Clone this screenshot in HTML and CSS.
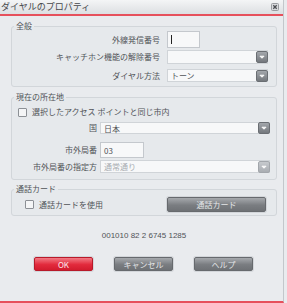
FILE: index.html
```html
<!DOCTYPE html>
<html lang="ja">
<head>
<meta charset="utf-8">
<link rel="stylesheet" href="styles.css">
</head>
<body>
<div class="window">
  <div class="titlebar">
    <span class="title">ダイヤルのプロパティ</span>
    <span class="close"><svg width="8" height="8" viewBox="0 0 8 8"><rect x="0.5" y="0.5" width="7" height="7" rx="1" fill="#d9dbde" stroke="#9a9da1"/><path d="M2.3 2.3 L5.7 5.7 M5.7 2.3 L2.3 5.7" stroke="#4a4d51" stroke-width="1.3"/></svg></span>
  </div>
  <div class="content">
    <fieldset class="group g1">
      <legend>全般</legend>
      <div class="frow f1"><span class="lbl">外線発信番号</span><span class="input code-in"><span class="caret"></span></span></div>
      <div class="frow f2"><span class="lbl">キャッチホン機能の解除番号</span><span class="select wide"><span class="val"></span><span class="drop"><svg width="12" height="12" viewBox="0 0 12 12"><path d="M3.5 5 L6 7.5 L8.5 5 Z" fill="#fff" stroke="#fff" stroke-width="1" stroke-linejoin="round"/></svg></span></span></div>
      <div class="frow f3"><span class="lbl">ダイヤル方法</span><span class="select wide"><span class="val">トーン</span><span class="drop"><svg width="12" height="12" viewBox="0 0 12 12"><path d="M3.5 5 L6 7.5 L8.5 5 Z" fill="#fff" stroke="#fff" stroke-width="1" stroke-linejoin="round"/></svg></span></span></div>
    </fieldset>

    <fieldset class="group g2">
      <legend>現在の所在地</legend>
      <div class="check c1"><span class="box"></span><span>選択したアクセス ポイントと同じ市内</span></div>
      <div class="frow2 r-country"><span class="lbl">国</span><span class="select full"><span class="val">日本</span><span class="drop"><svg width="12" height="12" viewBox="0 0 12 12"><path d="M3.5 5 L6 7.5 L8.5 5 Z" fill="#fff" stroke="#fff" stroke-width="1" stroke-linejoin="round"/></svg></span></span></div>
      <div class="frow2 r-area"><span class="lbl">市外局番</span><span class="input area-in">03</span></div>
      <div class="frow2 r-rule"><span class="lbl">市外局番の指定方</span><span class="select full disabled"><span class="val">通常通り</span><span class="drop"><svg width="12" height="12" viewBox="0 0 12 12"><path d="M3.5 5 L6 7.5 L8.5 5 Z" fill="#fff" stroke="#fff" stroke-width="1" stroke-linejoin="round"/></svg></span></span></div>
    </fieldset>

    <fieldset class="group g3">
      <legend>通話カード</legend>
      <div class="cardrow">
        <div class="check c2"><span class="box"></span><span>通話カードを使用</span></div>
        <span class="btn gray card-btn">通話カード</span>
      </div>
    </fieldset>

    <div class="number">001010 82 2 6745 1285</div>

    <div class="buttons">
      <span class="btn red">OK</span>
      <span class="btn gray">キャンセル</span>
      <span class="btn gray">ヘルプ</span>
    </div>
  </div>
</div>
</body>
</html>
```

FILE: styles.css
```css
html, body {
  margin: 0;
  padding: 0;
  background: #e9ebee;
}
body {
  font-family: "Noto Sans CJK JP", "Liberation Sans", sans-serif;
  font-size: 8px;
  color: #505357;
}
.window {
  width: 284px;
  height: 303px;
  box-sizing: border-box;
  border-right: 1px solid #c3c7cb;
  border-bottom: 2px solid #e6505c;
  background: #e9ebee;
  display: flex;
  flex-direction: column;
}
.titlebar {
  height: 14px;
  border-bottom: 2px solid #e6505c;
  background: linear-gradient(#f4f5f6, #dcdfe2);
  display: flex;
  align-items: center;
  justify-content: space-between;
  padding: 0 4px 0 1px;
}
.title {
  font-size: 9px;
  color: #45474b;
  line-height: 14px;
}
.close {
  display: flex;
  width: 8px;
  height: 8px;
}
.content {
  padding: 5px 0 0 11px;
  display: flex;
  flex-direction: column;
}
.group {
  margin: 0;
  width: 266px;
  box-sizing: border-box;
  border: 1px solid #d2d6da;
  border-radius: 3px;
  background: #e6e9ec;
  padding: 0;
}
.group legend {
  font-size: 8px;
  line-height: 10px;
  padding: 0 2px;
  margin-left: 2px;
  color: #505357;
}
.lbl {
  text-align: right;
  white-space: nowrap;
  line-height: 12px;
}
.frow {
  display: grid;
  grid-template-columns: 148px auto;
  column-gap: 7px;
  align-items: center;
}
.f1 { margin-top: 0; height: 17px; }
.f2 { margin-top: 2px; height: 14px; }
.f3 { margin-top: 5px; height: 13px; }
.g1 { padding-bottom: 4px; }

.input {
  box-sizing: border-box;
  background: #f7f8f9;
  border: 1px solid #c4c8cd;
  display: flex;
  align-items: center;
  padding-left: 3px;
  color: #505357;
}
.code-in {
  width: 33px;
  height: 17px;
}
.caret {
  width: 1px;
  height: 9px;
  background: #222;
}
.select {
  box-sizing: border-box;
  display: flex;
  align-items: center;
  height: 13px;
  background: #f7f8f9;
  border: 1px solid #d0d4d8;
  position: relative;
}
.select .val {
  flex: 1;
  padding-left: 3px;
  line-height: 11px;
}
.select .drop {
  width: 12px;
  height: 12px;
  border-radius: 2px;
  background: linear-gradient(#a3a7ac, #74787d);
  border: 1px solid #6a6e73;
  box-sizing: border-box;
  display: flex;
  align-items: center;
  justify-content: center;
  margin-right: -1px;
}
.select .drop svg { width: 10px; height: 10px; }
.wide { width: 101px; }
.f2 .select { height: 14px; }
.full { width: 170px; }
.disabled .val { color: #a9adb2; }
.disabled .drop {
  background: linear-gradient(#c6c9cd, #a9adb2);
  border-color: #a2a6ab;
}

.g2 { margin-top: 5px; padding-bottom: 6px; }
.check {
  display: flex;
  align-items: center;
  gap: 5px;
  line-height: 10px;
}
.check .box {
  width: 7px;
  height: 7px;
  border: 1px solid #8c9095;
  background: #f4f5f6;
  border-radius: 1px;
}
.c1 { padding-left: 6px; margin-top: 5px; }
.frow2 {
  display: grid;
  grid-template-columns: 85px auto;
  column-gap: 3px;
  align-items: center;
}
.r-country { margin-top: 5px; height: 12px; }
.r-country .select { height: 12px; }
.r-area { margin-top: 8px; height: 16px; }
.area-in { width: 44px; height: 16px; }
.r-rule { margin-top: 2px; height: 13px; }

.g3 { margin-top: 4px; padding-bottom: 3px; }
.cardrow {
  display: flex;
  align-items: center;
  justify-content: space-between;
  padding: 3px 10px 0 13px;
}
.btn {
  box-sizing: border-box;
  display: flex;
  align-items: center;
  justify-content: center;
  height: 15px;
  border-radius: 2px;
  color: #e4e6e8;
  font-size: 8px;
  box-shadow: 0 0 0 1px #d3d6da;
}
.gray {
  background: linear-gradient(#a6a9ad, #7a7d81 55%, #6e7175);
  border: 1px solid #676a6e;
}
.red {
  background: linear-gradient(#f37a84, #e22a3c 55%, #d21c2e);
  border: 1px solid #b81a2a;
  color: #fbeaec;
}
.card-btn { width: 99px; }

.number {
  text-align: center;
  width: 266px;
  margin-top: 15px;
  font-family: "Liberation Sans", sans-serif;
  font-size: 8px;
  line-height: 10px;
  color: #505357;
}
.buttons {
  display: flex;
  gap: 21px;
  padding-left: 23px;
  margin-top: 16px;
}
.buttons .btn { width: 59px; height: 14px; }
```
